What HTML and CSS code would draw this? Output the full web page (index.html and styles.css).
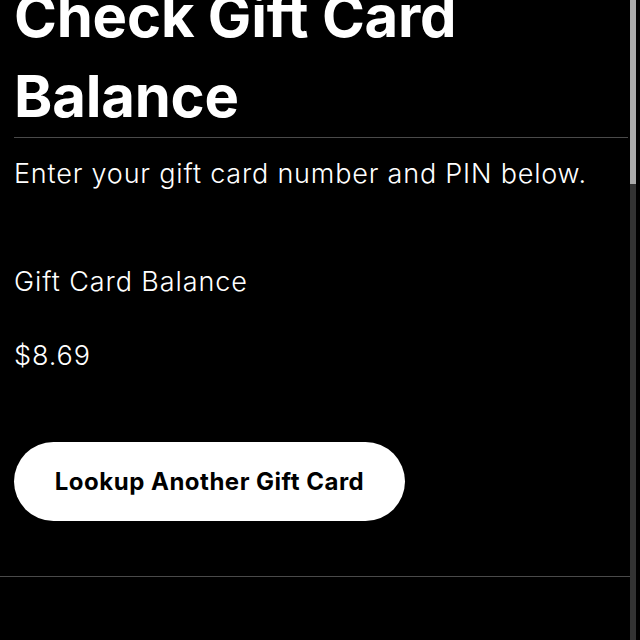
FILE: index.html
```html
<!DOCTYPE html>
<html lang="en">
<head>
  <meta charset="UTF-8" />
  <meta name="viewport" content="width=device-width, initial-scale=1" />
  <title>Check Gift Card Balance</title>
  <link rel="stylesheet" href="styles.css">
</head>
<body>
  <div class="balance-page">
    <h1 class="page-title">Check Gift Card Balance</h1>
    <p class="intro">Enter your gift card number and PIN below.</p>

    <div class="result">
      <p class="result-label">Gift Card Balance</p>
      <p class="result-amount">$8.69</p>
    </div>

    <button class="lookup-button">Lookup Another Gift Card</button>
  </div>
  <div class="page-end"></div>

  <div class="scrollbar"><div class="scrollbar-thumb"></div></div>
</body>
</html>
```

FILE: styles.css
```css
html, body {
  margin: 0;
  height: 100%;
  background-color: #000;
  overflow: hidden;
}
body {
  font-family: Inter, "Noto Sans", sans-serif;
  color: #fff;
  position: relative;
}
.balance-page {
  padding: 0 12px 0 14px;
}
.page-title {
  margin: -24px 0 0;
  padding-bottom: 1px;
  font-size: 58px;
  line-height: 80px;
  font-weight: 700;
  letter-spacing: -0.2px;
  border-bottom: 1px solid #4a4a4a;
}
.intro {
  margin: 20px 0 0;
  font-size: 27px;
  font-weight: 300;
  line-height: 32px;
  letter-spacing: 0.8px;
}
.result {
  margin-top: 76px;
}
.result-label,
.result-amount {
  margin: 0;
  font-size: 27px;
  font-weight: 300;
  line-height: 32px;
  letter-spacing: 0.9px;
}
.result-amount {
  margin-top: 42px;
}
.lookup-button {
  margin-top: 70px;
  width: 391px;
  height: 79px;
  border: none;
  border-radius: 40px;
  background-color: #fff;
  color: #000;
  font-family: inherit;
  font-size: 24px;
  font-weight: 700;
  letter-spacing: 0.5px;
  cursor: pointer;
}
.page-end {
  margin-top: 55px;
  margin-right: 10px;
  border-top: 1px solid #4a4a4a;
}
.scrollbar {
  position: absolute;
  top: 0;
  right: 4px;
  width: 6px;
  height: 100%;
  background-color: #333;
}
.scrollbar-thumb {
  height: 184px;
  background-color: #aaa;
}
```
